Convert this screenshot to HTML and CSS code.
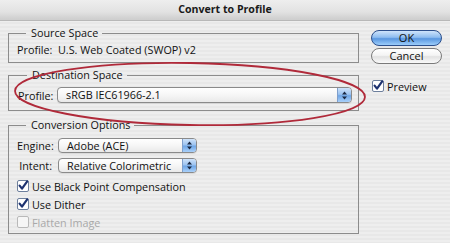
FILE: index.html
```html
<!DOCTYPE html>
<html>
<head>
<meta charset="utf-8">
<link rel="stylesheet" href="styles.css">
</head>
<body>
<div class="window">
  <div class="titlebar">Convert to Profile</div>
  <div class="content">
    <div class="main">
      <fieldset class="group g-source">
        <legend>Source Space</legend>
        <div class="line">Profile:&nbsp; U.S. Web Coated (SWOP) v2</div>
      </fieldset>
      <fieldset class="group g-dest">
        <legend>Destination Space</legend>
        <div class="field">
          <span class="lbl">Profile:</span>
          <div class="select wide"><span class="val">sRGB IEC61966-2.1</span><span class="arrows"><svg width="7" height="9" viewBox="0 0 7 9"><path d="M3.5 0.5 L6 3.5 H1 Z M3.5 8.5 L6 5.5 H1 Z" fill="#1b2a44"/></svg></span></div>
        </div>
      </fieldset>
      <fieldset class="group g-conv">
        <legend>Conversion Options</legend>
        <div class="field f-engine">
          <span class="lbl">Engine:</span>
          <div class="select narrow"><span class="val">Adobe (ACE)</span><span class="arrows"><svg width="7" height="9" viewBox="0 0 7 9"><path d="M3.5 0.5 L6 3.5 H1 Z M3.5 8.5 L6 5.5 H1 Z" fill="#1b2a44"/></svg></span></div>
        </div>
        <div class="field f-intent">
          <span class="lbl">Intent:</span>
          <div class="select narrow"><span class="val">Relative Colorimetric</span><span class="arrows"><svg width="7" height="9" viewBox="0 0 7 9"><path d="M3.5 0.5 L6 3.5 H1 Z M3.5 8.5 L6 5.5 H1 Z" fill="#1b2a44"/></svg></span></div>
        </div>
        <div class="checks">
          <div class="check"><svg class="cb" width="12" height="12" viewBox="0 0 12 12"><rect x="0.5" y="0.5" width="11" height="11" rx="1.5" class="box"/><path d="M2.6 5.6 L5 8.6 L10.2 1.4" class="tick"/></svg><span>Use Black Point Compensation</span></div>
          <div class="check"><svg class="cb" width="12" height="12" viewBox="0 0 12 12"><rect x="0.5" y="0.5" width="11" height="11" rx="1.5" class="box"/><path d="M2.6 5.6 L5 8.6 L10.2 1.4" class="tick"/></svg><span>Use Dither</span></div>
          <div class="check disabled"><svg class="cb" width="12" height="12" viewBox="0 0 12 12"><rect x="0.5" y="0.5" width="11" height="11" rx="1.5" class="box dis"/></svg><span>Flatten Image</span></div>
        </div>
      </fieldset>
    </div>
    <div class="side">
      <div class="btn ok">OK</div>
      <div class="btn cancel">Cancel</div>
      <div class="check preview"><svg class="cb" width="12" height="12" viewBox="0 0 12 12"><rect x="0.5" y="0.5" width="11" height="11" rx="1.5" class="box"/><path d="M2.6 5.6 L5 8.6 L10.2 1.4" class="tick"/></svg><span>Preview</span></div>
    </div>
  </div>
  <svg class="annot" width="450" height="243" viewBox="0 0 450 243"><ellipse cx="190" cy="94" rx="175" ry="31" transform="rotate(1 190 94)" fill="none" stroke="#b02a3a" stroke-width="1.8"/></svg>
</div>
</body>
</html>
```

FILE: styles.css
```css
* { box-sizing: border-box; }
html, body { margin: 0; padding: 0; }
body {
  width: 450px;
  height: 243px;
  overflow: hidden;
  font-family: "Open Sans", "DejaVu Sans", sans-serif;
  font-size: 10.8px;
  color: #111;
}
.window {
  position: relative;
  width: 450px;
  height: 243px;
  background: repeating-linear-gradient(to bottom, #eeeeee 0, #eeeeee 2px, #e8e8e8 2px, #e8e8e8 4px);
}
.titlebar {
  height: 21px;
  line-height: 18px;
  text-align: center;
  font-weight: 700;
  font-size: 10.6px;
  color: #1a1a1a;
  background: linear-gradient(to bottom, #eeeeee 0, #e2e2e2 60%, #cfcfcf 95%);
  border-bottom: 1px solid #b8b8b8;
}
.content {
  display: flex;
  padding-left: 8px;
}
.main {
  width: 351px;
  padding-top: 5px;
  display: flex;
  flex-direction: column;
}
.group {
  margin: 0;
  border: 1px solid #8c8c8c;
  padding: 0 5px 0 8px;
  min-width: 0;
}
.group legend {
  margin-left: 9px;
  padding: 0 4px 0 5px;
  line-height: 14px;
  font-size: 10.8px;
  color: #111;
}
.g-source { padding-top: 3px; padding-bottom: 5px; }
.line { line-height: 14px; }
.g-dest { margin-top: 5px; padding-top: 5px; padding-bottom: 7px; padding-left: 9px; }
.g-conv { margin-top: 7px; padding-top: 6px; padding-bottom: 2px; }
.field {
  display: flex;
  align-items: center;
  height: 16px;
}
.lbl {
  width: 35px;
  text-align: right;
  margin-right: 5px;
  white-space: nowrap;
}
.g-dest .lbl { width: 34px; }
.f-engine { height: 15px; }
.f-intent { height: 15px; margin-top: 5px; }
.select {
  display: flex;
  align-items: stretch;
  height: 16px;
  border: 1px solid #8a8a8a;
  border-radius: 4px;
  background: linear-gradient(to bottom, #ffffff 0, #f6f6f6 50%, #e9e9e9 100%);
  overflow: hidden;
  box-shadow: 0 1px 0 rgba(0,0,0,0.08);
}
.f-engine .select, .f-intent .select { height: 15px; }
.select.wide { width: 295px; }
.select.narrow { width: 139px; margin-left: 1px; }
.val {
  flex: 1;
  padding-left: 8px;
  line-height: 14px;
  white-space: nowrap;
}
.arrows {
  width: 14px;
  display: flex;
  align-items: center;
  justify-content: center;
  border-left: 1px solid #7f9fcc;
  background: linear-gradient(to bottom, #cfe3fa 0, #9cc3f0 45%, #6fa6e6 55%, #a9d0fa 100%);
}
.checks {
  margin-top: 4px;
  display: flex;
  flex-direction: column;
}
.check {
  display: flex;
  align-items: center;
  height: 18px;
  white-space: nowrap;
}
.cb { margin-right: 3px; flex: none; }
.box { fill: #ffffff; stroke: #6d7f9c; stroke-width: 1; }
.box.dis { stroke: #b9b9b9; fill: #f6f6f6; }
.tick { fill: none; stroke: #1d3270; stroke-width: 2.2; stroke-linecap: round; stroke-linejoin: round; }
.disabled span { color: #a9a9a9; }
.side {
  width: 71px;
  margin-left: 12px;
  padding-top: 9px;
  display: flex;
  flex-direction: column;
}
.btn {
  height: 16px;
  border-radius: 8px;
  text-align: center;
  line-height: 14px;
  font-size: 11px;
  color: #111;
}
.btn.ok {
  border: 1px solid #2c4f8c;
  background: linear-gradient(to bottom, #cfe4fb 0, #8ebdf0 45%, #5a97e0 55%, #9ccdfa 100%);
}
.btn.cancel {
  margin-top: 2px;
  border: 1px solid #7a7a7a;
  background: linear-gradient(to bottom, #ffffff 0, #f4f4f4 45%, #e2e2e2 55%, #fafafa 100%);
}
.preview {
  margin-top: 15px;
  margin-left: 1px;
  height: 14px;
}
.annot {
  position: absolute;
  left: 0;
  top: 0;
  pointer-events: none;
}
```
